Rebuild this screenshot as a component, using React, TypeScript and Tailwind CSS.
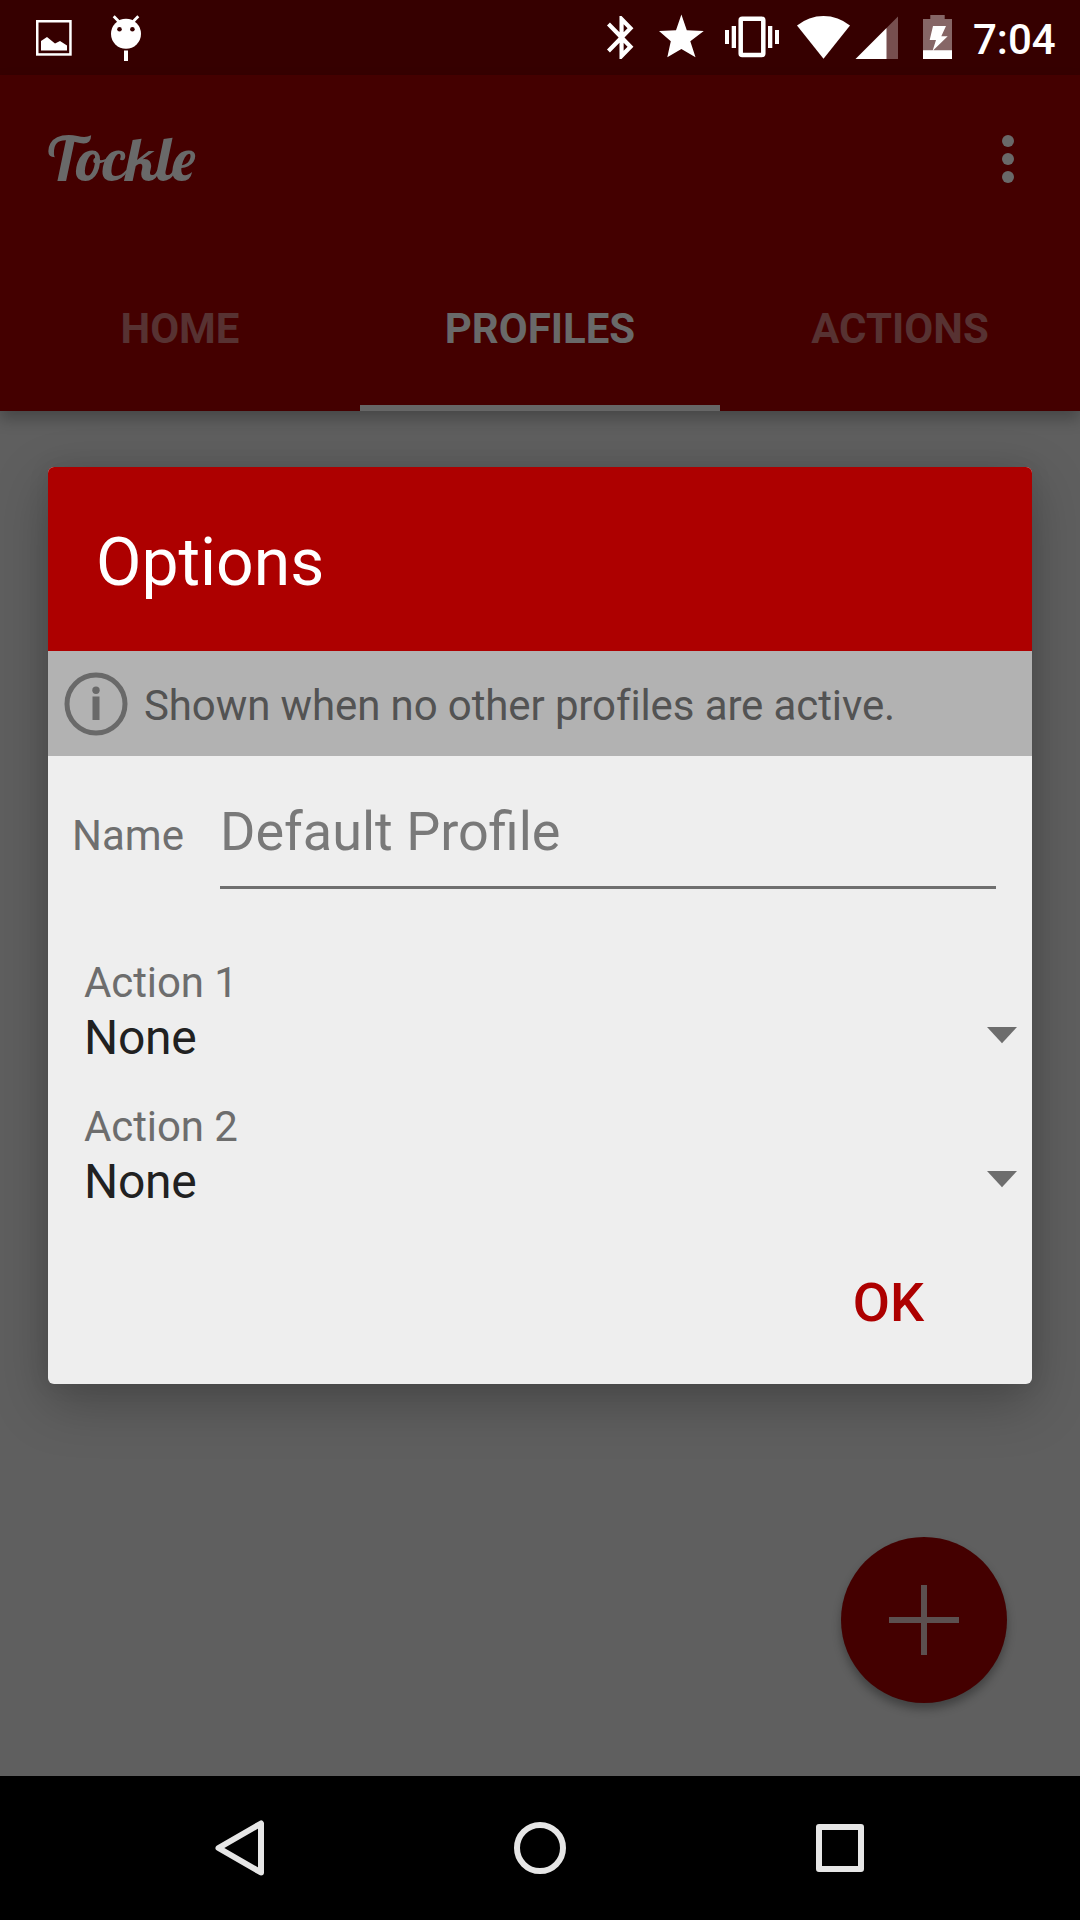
import React from "react";

function StatusBar() {
  return (
    <div className="flex h-[75px] items-center bg-[#360000] pl-9 text-white">
      <svg width="36" height="75" viewBox="36 0 36 75">
        <rect x="37.25" y="21.25" width="33.2" height="33.2" fill="none" stroke="#fff" strokeWidth="2.5" />
        <path d="M41 50.5V41l6-4 8 6.5 5-2.5 7 4.5v5z" fill="#fff" />
      </svg>
      <svg className="ml-9" width="36" height="75" viewBox="108 0 36 75">
        <path d="M113.7 16.3l5.6 5.7M138.3 16.3l-5.6 5.7" stroke="#fff" strokeWidth="2.8" />
        <circle cx="126" cy="33.8" r="15" fill="#fff" />
        <circle cx="119.5" cy="29.2" r="2.3" fill="#360000" />
        <circle cx="132.4" cy="29.2" r="2.3" fill="#360000" />
        <rect x="124" y="50.5" width="4" height="10.5" fill="#fff" />
      </svg>
      <svg className="ml-auto" width="30" height="75" viewBox="605 0 30 75">
        <path
          transform="translate(596.6 11.7) scale(2.08 2.15)"
          fill="#fff"
          d="M17.71 7.71L12 2h-1v7.59L6.41 5 5 6.41 10.59 12 5 17.59 6.41 19 11 14.41V22h1l5.71-5.71-4.3-4.29 4.3-4.29zM13 5.83l1.88 1.88L13 9.59V5.83zm1.88 10.46L13 18.17v-3.76l1.88 1.88z"
        />
      </svg>
      <svg className="ml-6" width="46" height="75" viewBox="659 0 46 75">
        <path
          fill="#fff"
          d="M681.4 14.5l5.4 15.8 17 .7-13.5 10.3 5.2 15.9-14.1-8.3-14.1 8.3 3.5-15.9L659 31l17-.7z"
        />
      </svg>
      <svg className="ml-5" width="54" height="75" viewBox="725 0 54 75">
        <rect x="740.7" y="18.8" width="22.6" height="36.1" rx="1.5" fill="none" stroke="#fff" strokeWidth="4.5" />
        <path
          fill="#fff"
          d="M725 30h4v14h-4zM731.7 26h4.3v22h-4.3zM768 26h4.3v22h-4.3zM775 30h4v14h-4z"
        />
      </svg>
      <svg className="ml-[18px]" width="54" height="75" viewBox="797 0 54 75">
        <path fill="#fff" d="M797 25.5a42 42 0 0 1 53 0L823.5 58.7z" />
      </svg>
      <svg className="ml-1" width="43" height="75" viewBox="855 0 43 75">
        <path fill="#774f4f" d="M886 28.5L898 16.5V59h-12z" />
        <path fill="#fff" d="M855.5 59l31-31v31z" />
      </svg>
      <svg className="ml-[25px]" width="29" height="75" viewBox="923 0 29 75">
        <path fill="#866666" d="M930.3 15h14.4v4h7.3v40h-29V19h7.3z" />
        <path fill="#fff" d="M923 50.3h29V59h-29zM933 26h13l-4.7 10.3h6.4L932.5 51l3.5-11h-6.3z" />
      </svg>
      <span className="ml-[21px] w-[107px] pt-[5px] text-[42px] font-medium leading-[50px]">7:04</span>
    </div>
  );
}

function AppBar() {
  return (
    <header className="h-[336px] bg-[#440000] shadow-[0_8px_14px_rgba(0,0,0,0.25)]">
      <div className="flex h-[168px] items-center justify-between pl-12 pr-[66px]">
        <h1 className="font-['Lobster','Liberation_Serif',serif] text-[60px] font-normal leading-none text-[#696969]">
          Tockle
        </h1>
        <div className="flex flex-col gap-1.5">
          <span className="size-3 rounded-full bg-[#696969]" />
          <span className="size-3 rounded-full bg-[#696969]" />
          <span className="size-3 rounded-full bg-[#696969]" />
        </div>
      </div>
      <nav className="grid h-[168px] grid-cols-3 text-center text-[42px] font-bold leading-[172px] text-[#573232]">
        <span>HOME</span>
        <span className="h-[168px] border-b-[6px] border-[#666] text-[#696969]">PROFILES</span>
        <span>ACTIONS</span>
      </nav>
    </header>
  );
}

function Spinner({ label, value }: { label: string; value: string }) {
  return (
    <div className="flex h-36 items-start justify-between pl-9 pr-[15px] text-[#6d6d6d]">
      <div>
        <div className="text-[42px] leading-[50px] tracking-[-0.1px]">{label}</div>
        <div className="mt-0.5 text-[48px] leading-[56px] tracking-[-0.3px] text-[#212121]">{value}</div>
      </div>
      <svg className="mt-[69px]" width="30" height="17" viewBox="0 0 30 17">
        <path d="M0 0h30L15 16.3z" fill="currentColor" />
      </svg>
    </div>
  );
}

function OptionsDialog() {
  return (
    <section className="absolute left-12 top-[467px] flex h-[917px] w-[984px] flex-col overflow-hidden rounded-md bg-[#eee] shadow-[0_18px_54px_rgba(0,0,0,0.26),0_0_22px_rgba(0,0,0,0.08)]">
      <h2 className="h-[184px] bg-[#ad0000] pl-12 text-[66px] leading-[191px] text-white">Options</h2>
      <div className="flex h-[105px] items-center bg-[#b2b2b2] pl-4 text-[42px] text-[#535353]">
        <svg width="64" height="64" viewBox="64 672 64 64" fill="#696969">
          <circle cx="96" cy="704" r="29" fill="none" stroke="#696969" strokeWidth="5" />
          <circle cx="96" cy="690.3" r="3.7" />
          <rect x="92.5" y="696.5" width="7" height="23.5" />
        </svg>
        <span className="ml-4 pt-1 leading-[50px] tracking-[-0.11px]">Shown when no other profiles are active.</span>
      </div>
      <div className="flex h-[133px] items-baseline pl-6 pr-9 pt-[44px] text-[42px] text-[#6f6f6f]">
        <label className="w-[148px]">Name</label>
        <div className="h-[89px] flex-1 border-b-[3px] border-[#6f6f6f] text-[54px] leading-[64px] text-[#797979]">
          Default Profile
        </div>
      </div>
      <div className="pt-[69px]">
        <Spinner label="Action 1" value="None" />
        <Spinner label="Action 2" value="None" />
      </div>
      <button className="ml-auto mr-[108px] mt-[25px] text-[54px] font-medium leading-[64px] text-[#ad0000]">OK</button>
    </section>
  );
}

function NavigationBar() {
  return (
    <footer className="flex h-36 items-center justify-around bg-black px-[90px]">
      {["back", "home", "recent"].map((name) => (
        <svg key={name} width="60" height="60" viewBox="0 0 60 60" fill="none" stroke="#e6e6e6" strokeWidth="6" strokeLinejoin="round">
          {name === "back" && <path d="M8.5 30L51 5.5v49z" />}
          {name === "home" && <circle cx="30" cy="30" r="23" />}
          {name === "recent" && <rect x="9" y="9" width="42" height="42" />}
        </svg>
      ))}
    </footer>
  );
}

export default function App() {
  return (
    <div className="relative flex h-[1920px] w-[1080px] flex-col overflow-hidden bg-[#5f5f5f] font-['Roboto',sans-serif]">
      <StatusBar />
      <AppBar />
      <main className="flex flex-1 items-end justify-end pb-[73px] pr-[73px]">
        <div className="flex size-[166px] items-center justify-center rounded-full bg-[#440000] shadow-[0_6px_10px_rgba(0,0,0,0.32)]">
          <svg width="72" height="72" viewBox="0 0 72 72" fill="#5c5050">
            <path d="M33 1h6v32h32v6H39v32h-6V39H1v-6h32z" />
          </svg>
        </div>
      </main>
      <NavigationBar />
      <OptionsDialog />
    </div>
  );
}
